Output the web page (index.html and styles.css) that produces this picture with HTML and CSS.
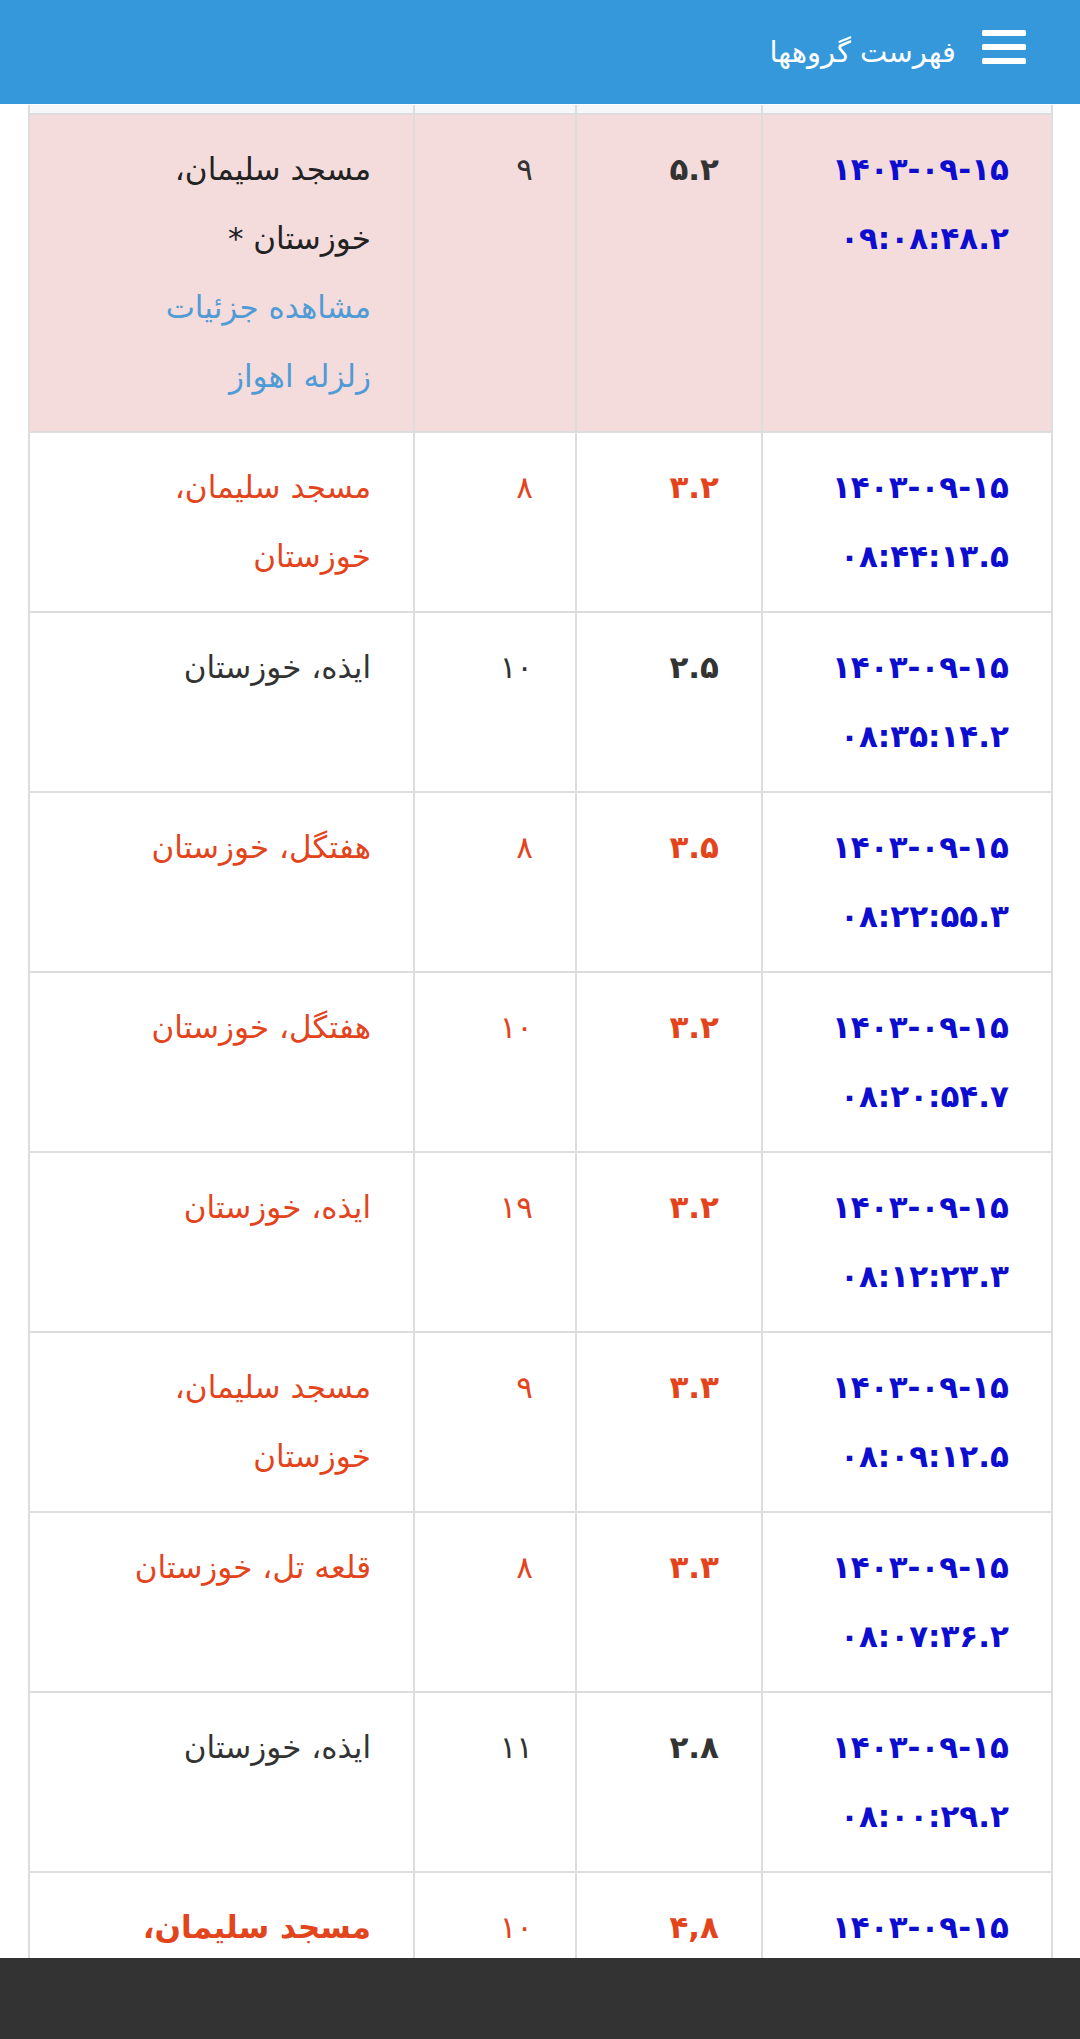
FILE: index.html
```html
<!DOCTYPE html>
<html lang="fa" dir="rtl">
<head>
<meta charset="utf-8">
<title>فهرست گروهها</title>
<link rel="stylesheet" href="styles.css">
</head>
<body>
<header class="topbar">
  <svg class="menu-icon" width="44" height="34" viewBox="0 0 44 34" aria-hidden="true">
    <rect x="0" y="0" width="44" height="6" rx="1.5" fill="#fff"/>
    <rect x="0" y="14" width="44" height="6" rx="1.5" fill="#fff"/>
    <rect x="0" y="28" width="44" height="6" rx="1.5" fill="#fff"/>
  </svg>
  <span class="title">فهرست گروهها</span>
</header>

<main class="content">
  <table class="quakes">
    <colgroup>
      <col class="c-date"><col class="c-mag"><col class="c-depth"><col class="c-loc">
    </colgroup>
    <thead>
      <tr class="head-strip"><th></th><th></th><th></th><th></th></tr>
    </thead>
    <tbody>
      <tr class="danger">
        <td class="date"><span class="d">۱۴۰۳-۰۹-۱۵</span><span class="d">۰۹:۰۸:۴۸.۲</span></td>
        <td class="mag">۵.۲</td>
        <td class="depth">۹</td>
        <td class="loc">مسجد سلیمان، خوزستان *<a class="detail" href="#">مشاهده جزئیات زلزله اهواز</a></td>
      </tr>
      <tr class="hot">
        <td class="date"><span class="d">۱۴۰۳-۰۹-۱۵</span><span class="d">۰۸:۴۴:۱۳.۵</span></td>
        <td class="mag">۳.۲</td>
        <td class="depth">۸</td>
        <td class="loc">مسجد سلیمان، خوزستان</td>
      </tr>
      <tr>
        <td class="date"><span class="d">۱۴۰۳-۰۹-۱۵</span><span class="d">۰۸:۳۵:۱۴.۲</span></td>
        <td class="mag">۲.۵</td>
        <td class="depth">۱۰</td>
        <td class="loc">ایذه، خوزستان</td>
      </tr>
      <tr class="hot">
        <td class="date"><span class="d">۱۴۰۳-۰۹-۱۵</span><span class="d">۰۸:۲۲:۵۵.۳</span></td>
        <td class="mag">۳.۵</td>
        <td class="depth">۸</td>
        <td class="loc">هفتگل، خوزستان</td>
      </tr>
      <tr class="hot">
        <td class="date"><span class="d">۱۴۰۳-۰۹-۱۵</span><span class="d">۰۸:۲۰:۵۴.۷</span></td>
        <td class="mag">۳.۲</td>
        <td class="depth">۱۰</td>
        <td class="loc">هفتگل، خوزستان</td>
      </tr>
      <tr class="hot">
        <td class="date"><span class="d">۱۴۰۳-۰۹-۱۵</span><span class="d">۰۸:۱۲:۲۳.۳</span></td>
        <td class="mag">۳.۲</td>
        <td class="depth">۱۹</td>
        <td class="loc">ایذه، خوزستان</td>
      </tr>
      <tr class="hot">
        <td class="date"><span class="d">۱۴۰۳-۰۹-۱۵</span><span class="d">۰۸:۰۹:۱۲.۵</span></td>
        <td class="mag">۳.۳</td>
        <td class="depth">۹</td>
        <td class="loc">مسجد سلیمان، خوزستان</td>
      </tr>
      <tr class="hot">
        <td class="date"><span class="d">۱۴۰۳-۰۹-۱۵</span><span class="d">۰۸:۰۷:۳۶.۲</span></td>
        <td class="mag">۳.۳</td>
        <td class="depth">۸</td>
        <td class="loc">قلعه تل، خوزستان</td>
      </tr>
      <tr>
        <td class="date"><span class="d">۱۴۰۳-۰۹-۱۵</span><span class="d">۰۸:۰۰:۲۹.۲</span></td>
        <td class="mag">۲.۸</td>
        <td class="depth">۱۱</td>
        <td class="loc">ایذه، خوزستان</td>
      </tr>
      <tr class="hot strong">
        <td class="date"><span class="d">۱۴۰۳-۰۹-۱۵</span></td>
        <td class="mag">۴,۸</td>
        <td class="depth">۱۰</td>
        <td class="loc">مسجد سلیمان، خوزستان</td>
      </tr>
    </tbody>
  </table>
</main>

<footer class="bottombar"></footer>
</body>
</html>
```
FILE: styles.css
```css
html, body {
  margin: 0;
  padding: 0;
  background: #ffffff;
  height: 2039px;
  overflow: hidden;
}

body {
  font-family: "DejaVu Sans", "Noto Sans", sans-serif;
  color: #333333;
  direction: rtl;
}

.topbar {
  height: 104px;
  background: #3498db;
  display: flex;
  align-items: center;
  padding-right: 54px;
  gap: 26px;
  box-sizing: border-box;
}

.menu-icon {
  display: block;
  margin-top: -11px;
}

.title {
  color: #ffffff;
  font-size: 29px;
  margin-top: 0;
}

.content {
  padding: 1px 27px 0 30px;
}

.quakes {
  width: 1023px;
  border-collapse: collapse;
  table-layout: fixed;
  font-size: 31px;
}

.c-date { width: 290px; }
.c-mag { width: 186px; }
.c-depth { width: 162px; }
.c-loc { width: 385px; }

.quakes th,
.quakes td {
  border: 2px solid #dddddd;
  vertical-align: top;
  text-align: right;
}

.head-strip th {
  height: 8px;
  padding: 0;
  background: #f5f7f9;
  border-top: none;
}

.quakes td {
  padding: 20px 42px 20px 36px;
  line-height: 69px;
}

.quakes td.loc {
  padding-left: 80px;
}

.quakes tr.danger td {
  background: #f4dcdc;
}

.date {
  color: #0d0dd0;
  font-weight: bold;
}

.date .d {
  display: block;
}

.mag {
  font-weight: bold;
  color: #333333;
}

.depth {
  color: #333333;
}

.loc {
  color: #333333;
}

.danger .loc {
  color: #222222;
}

.detail {
  display: block;
  color: #4f9bd6;
  text-decoration: none;
}

.hot .mag,
.hot .depth,
.hot .loc {
  color: #e3441c;
}

.strong .loc {
  font-weight: bold;
}

.bottombar {
  position: fixed;
  left: 0;
  right: 0;
  bottom: 0;
  height: 81px;
  background: #333333;
}
```
